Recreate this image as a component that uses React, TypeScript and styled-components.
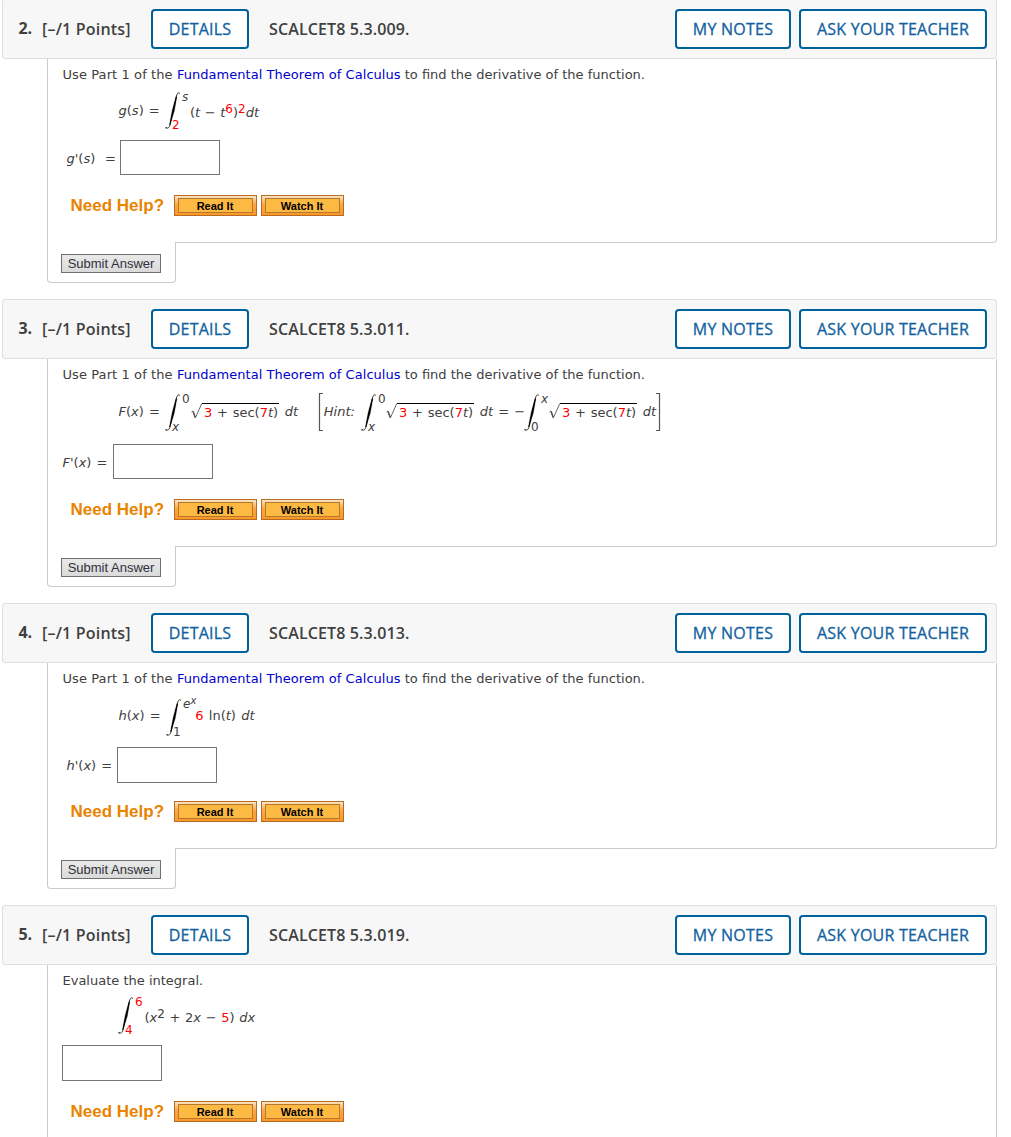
import React from "react";
import styled, { createGlobalStyle } from "styled-components";

const GlobalStyle = createGlobalStyle`
  * { box-sizing: border-box; }
  html, body { margin: 0; padding: 0; background: #fff; overflow: hidden; }
`;

const sans = `"Open Sans", "Noto Sans", sans-serif`;
const verdana = `Verdana, "DejaVu Sans", sans-serif`;
const arial = `Arial, "Liberation Sans", sans-serif`;

const Page = styled.main`
  width: 1011px;
  height: 1137px;
  overflow: hidden;
  padding-left: 2px;
  color: #404040;
  font: 13px/16px ${verdana};
`;

const Question = styled.section<{ $first?: boolean }>`
  width: 995px;
  margin-top: ${(p) => (p.$first ? -1 : 0)}px;
  margin-bottom: 16px;
`;

const Header = styled.header`
  display: flex;
  align-items: center;
  height: 60px;
  padding: 0 9px 0 15px;
  background: #f7f7f7;
  border: 1px solid #dedede;
  border-radius: 3px;
  font: 600 16px/22px ${sans};
`;

const Num = styled.span`
  width: 24px;
  padding: 0 0 2px 0.5px;
  font-weight: 700;
  letter-spacing: -0.2px;
`;

const Points = styled.span`
  width: 109px;
  letter-spacing: 0.2px;
  white-space: nowrap;
`;

const Source = styled.span`
  flex: 1;
  margin-left: 20px;
  letter-spacing: 0.12px;
`;

const HeaderButton = styled.button<{ $w: number }>`
  width: ${(p) => p.$w}px;
  height: 40px;
  padding: 0;
  border: 2px solid #00629b;
  border-radius: 4px;
  background: #fff;
  color: #1161a0;
  font: 500 16px/22px ${sans};
  letter-spacing: 0.23px;
  -webkit-text-stroke: 0.3px #1161a0;
  white-space: nowrap;
  & + & { margin-left: 8px; }
`;

const Body = styled.div<{ $h: number }>`
  height: ${(p) => p.$h}px;
  margin-left: 45px;
  padding: 6px 0 0 14px;
  background: #fff;
  border: solid #cacaca;
  border-width: 0 1px 1px 1px;
  border-radius: 0 0 4px 0;
`;

const SubmitTab = styled.div`
  width: 129px;
  height: 41px;
  margin: -1px 0 0 45px;
  padding: 12px 0 0 13px;
  background: #fff;
  border: solid #cacaca;
  border-width: 0 1px 1px 1px;
  border-radius: 0 0 4px 4px;
`;

const SubmitButton = styled.button`
  display: block;
  width: 100px;
  height: 19px;
  padding: 0;
  border: 1px solid #6f6f6f;
  background: linear-gradient(#e9e9e9, #dadada);
  color: #303038;
  font: 13px/17px ${arial};
`;

const Prompt = styled.p`
  margin: 0;
  padding-left: 0.5px;
  line-height: 20px;
  white-space: nowrap;
`;

const Lead = styled.span`
  letter-spacing: 0.09px;
`;

const Link = styled.a`
  color: #0000cc;
  letter-spacing: 0.04px;
`;

const MathRow = styled.div<{ $gap: number; $h: number }>`
  display: flex;
  align-items: flex-start;
  height: ${(p) => p.$h}px;
  margin: ${(p) => p.$gap}px 0 0 56px;
  white-space: pre;
`;

const Term = styled.span<{ $w?: number; $drop: number; $ws?: number; $pad?: number }>`
  flex: none;
  width: ${(p) => (p.$w ? p.$w + "px" : "auto")};
  margin-top: ${(p) => p.$drop}px;
  padding-left: ${(p) => p.$pad ?? 0.5}px;
  word-spacing: ${(p) => p.$ws ?? 1}px;
  white-space: pre;
`;

const Red = styled.span`
  color: #ff0000;
`;

const Sup = styled.sup`
  font-size: 12px;
  line-height: 0;
  vertical-align: 4px;
`;

const IntegralBox = styled.span<{ $w: number; $drop: number }>`
  display: flex;
  flex: none;
  width: ${(p) => p.$w}px;
  height: 38px;
  margin-top: ${(p) => p.$drop}px;
  svg { flex: none; }
`;

const Limits = styled.span`
  display: flex;
  flex-direction: column;
  justify-content: space-between;
  height: 38px;
  padding-left: 1px;
  font-size: 12px;
  line-height: 10px;
`;

const Lower = styled.span`
  margin-left: -10px;
`;

const Exponent = styled.sup`
  font-size: 10px;
  line-height: 0;
  vertical-align: 4px;
`;

const RadicalBox = styled.span<{ $drop: number }>`
  display: flex;
  flex: none;
  width: 88px;
  margin-top: ${(p) => p.$drop}px;
  svg { flex: none; }
`;

const Radicand = styled.span`
  width: 77px;
  height: 16px;
  padding-left: 2px;
  border-top: 1px solid #000;
  line-height: 17px;
  word-spacing: 0.6px;
`;

const AnswerRow = styled.div<{ $indent: number }>`
  display: flex;
  align-items: flex-start;
  padding-left: ${(p) => p.$indent}px;
`;

const AnswerBox = styled.input<{ $h: number }>`
  width: 100px;
  height: ${(p) => p.$h}px;
  padding: 0 4px;
  border: 1px solid #767676;
  border-radius: 0;
  background: #fff;
`;

const Help = styled.div<{ $gap: number }>`
  display: flex;
  height: 21px;
  margin-top: ${(p) => p.$gap}px;
  padding-left: 8px;
`;

const HelpLabel = styled.span`
  width: 104px;
  padding-left: 0.5px;
  color: #e98300;
  font: bold 17px/21px ${arial};
`;

const HelpButton = styled.button`
  width: 83px;
  height: 21px;
  margin-right: 4px;
  padding: 2px 3px;
  border: 1px solid #b56d24;
  background: linear-gradient(#fde3c4, #fba645 45%, #fb962a);
`;

const HelpFace = styled.span`
  display: block;
  height: 15px;
  padding-right: 1px;
  border: 1px solid #b8782c;
  background: #fdba43;
  color: #000;
  font: bold 11px/14px ${arial};
`;

function Integral(p: { w: number; drop: number; upper: React.ReactNode; lower: React.ReactNode }) {
  return (
    <IntegralBox $w={p.w} $drop={p.drop}>
      <svg width="16" height="38" viewBox="0 0 16 38">
        <path
          d="M15 1.5C13.6 .3 12.2 .8 11.5 4L5.2 32C4.5 35.4 3 37 .8 35.7"
          fill="none"
          stroke="#333"
          strokeWidth="1"
        />
        <path d="M11 4.5L11.8 5L9.3 19L5 33L4.5 32.5L7.3 18Z" fill="#000" stroke="#000" strokeWidth=".3" />
        <circle cx="1.1" cy="35.8" r=".8" fill="#333" />
      </svg>
      <Limits>
        <span>{p.upper}</span>
        <Lower>{p.lower}</Lower>
      </Limits>
    </IntegralBox>
  );
}

function Radical({ drop }: { drop: number }) {
  return (
    <RadicalBox $drop={drop}>
      <svg width="11" height="17" viewBox="0 0 11 17">
        <path d="M.5 9L2 8L4.3 15L10.8 .5" fill="none" stroke="#666" strokeWidth="1" />
        <path d="M2 8.2L4.3 14.5" stroke="#555" strokeWidth="1.5" />
      </svg>
      <Radicand>
        <Red>3</Red> + sec(<Red>7</Red>
        <i>t</i>)
      </Radicand>
    </RadicalBox>
  );
}

function Bracket({ right }: { right?: boolean }) {
  return (
    <svg width="5" height="38" viewBox="0 0 5 38">
      <path d={right ? "M0 .5H3.5V37.5H0" : "M5 .5H1.5V37.5H5"} fill="none" stroke="#555" strokeWidth="1.2" />
    </svg>
  );
}

function TheoremPrompt() {
  return (
    <Prompt>
      <Lead>Use Part 1 of the </Lead>
      <Link>Fundamental Theorem of Calculus</Link> to find the derivative of the function.
    </Prompt>
  );
}

function QuestionCard(p: {
  n: number;
  code: string;
  h: number;
  helpGap: number;
  first?: boolean;
  submit?: boolean;
  children: React.ReactNode;
}) {
  return (
    <Question $first={p.first}>
      <Header>
        <Num>{p.n}.</Num>
        <Points>[–/1 Points]</Points>
        <HeaderButton $w={98}>DETAILS</HeaderButton>
        <Source>SCALCET8 5.3.{p.code}.</Source>
        <HeaderButton $w={116}>MY NOTES</HeaderButton>
        <HeaderButton $w={188}>ASK YOUR TEACHER</HeaderButton>
      </Header>
      <Body $h={p.h}>
        {p.children}
        <Help $gap={p.helpGap}>
          <HelpLabel>Need Help?</HelpLabel>
          <HelpButton><HelpFace>Read It</HelpFace></HelpButton>
          <HelpButton><HelpFace>Watch It</HelpFace></HelpButton>
        </Help>
      </Body>
      {p.submit && (
        <SubmitTab>
          <SubmitButton>Submit Answer</SubmitButton>
        </SubmitTab>
      )}
    </Question>
  );
}

export default function App() {
  return (
    <Page>
      <GlobalStyle />
      <QuestionCard n={2} code="009" h={184} helpGap={20} first submit>
        <TheoremPrompt />
        <MathRow $gap={7} $h={48}>
          <Term $w={47} $drop={11}><i>g</i>(<i>s</i>) =</Term>
          <Integral w={25} drop={0} upper={<i>s</i>} lower={<Red>2</Red>} />
          <Term $drop={13} $pad={0} $ws={0.4}>
            (<i>t</i> − <i>t</i><Sup><Red>6</Red></Sup>)<Sup><Red>2</Red></Sup><i>dt</i>
          </Term>
        </MathRow>
        <AnswerRow $indent={4}>
          <Term $w={54} $drop={11} $ws={0.7}><i>g'</i>(<i>s</i>)  =</Term>
          <AnswerBox $h={35} />
        </AnswerRow>
      </QuestionCard>

      <QuestionCard n={3} code="011" h={188} helpGap={20} submit>
        <TheoremPrompt />
        <MathRow $gap={8} $h={51}>
          <Term $w={47} $drop={11}><i>F</i>(<i>x</i>) =</Term>
          <Integral w={26} drop={1} upper="0" lower={<i>x</i>} />
          <Radical drop={10} />
          <Term $w={39} $drop={11}> <i>dt</i></Term>
          <Bracket />
          <Term $w={38} $drop={11} $pad={0.8}><i>Hint:</i></Term>
          <Integral w={25} drop={1} upper="0" lower={<i>x</i>} />
          <Radical drop={10} />
          <Term $w={50} $drop={11}> <i>dt</i> = −</Term>
          <Integral w={25} drop={1} upper={<i>x</i>} lower="0" />
          <Radical drop={10} />
          <Term $w={19} $drop={11}> <i>dt</i></Term>
          <Bracket right />
        </MathRow>
        <AnswerRow $indent={0}>
          <Term $w={51} $drop={11}><i>F'</i>(<i>x</i>) =</Term>
          <AnswerBox $h={35} />
        </AnswerRow>
      </QuestionCard>

      <QuestionCard n={4} code="013" h={186} helpGap={18} submit>
        <TheoremPrompt />
        <MathRow $gap={8} $h={50}>
          <Term $w={48} $drop={11}><i>h</i>(<i>x</i>) =</Term>
          <Integral w={29} drop={2} upper={<i>e<Exponent>x</Exponent></i>} lower="1" />
          <Term $drop={11} $pad={0.2} $ws={1.2}><Red>6</Red> ln(<i>t</i>) <i>dt</i></Term>
        </MathRow>
        <AnswerRow $indent={4}>
          <Term $w={51} $drop={11}><i>h'</i>(<i>x</i>) =</Term>
          <AnswerBox $h={36} />
        </AnswerRow>
      </QuestionCard>

      <QuestionCard n={5} code="019" h={186} helpGap={20}>
        <Prompt>Evaluate the integral.</Prompt>
        <MathRow $gap={6} $h={48}>
          <Integral w={26} drop={0} upper={<Red>6</Red>} lower={<Red>4</Red>} />
          <Term $drop={13} $ws={0.5}>
            (<i>x</i><Sup>2</Sup> + 2<i>x</i> − <Red>5</Red>) <i>dx</i>
          </Term>
        </MathRow>
        <AnswerRow $indent={0}>
          <AnswerBox $h={36} />
        </AnswerRow>
      </QuestionCard>
    </Page>
  );
}
